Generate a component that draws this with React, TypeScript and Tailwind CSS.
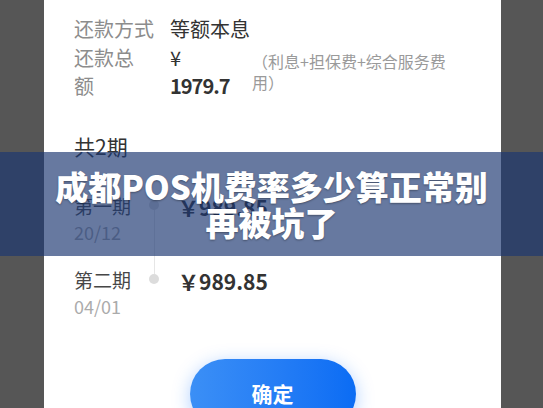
const font = "font-['Noto_Sans_CJK_SC','Noto_Sans',sans-serif]";

type Installment = { name: string; date: string; amount: string };

const installments: Installment[] = [
  { name: "第一期", date: "20/12", amount: "989.85" },
  { name: "第二期", date: "04/01", amount: "989.85" },
];

function InstallmentRow({ item, first, last }: { item: Installment; first: boolean; last: boolean }) {
  return (
    <div className={`flex ${last ? "" : "pb-[22px]"}`}>
      <div className="w-[70px] shrink-0">
        <div className="text-[19px] leading-[26px] text-[#474747]">{item.name}</div>
        <div className="text-[18px] leading-[26px] text-[#ababab]">{item.date}</div>
      </div>
      {/* timeline: dot on the name line, thin rail to the next row */}
      <div className={`w-[20px] shrink-0 flex flex-col items-center ${last ? "" : "-mb-[22px]"}`}>
        <div className={`h-[7px] w-px ${first ? "bg-transparent" : "bg-[#e6e6e6]"}`} />
        <div className="size-[10px] rounded-full bg-[#dcdcdc]" />
        {!last && <div className="w-px flex-1 bg-[#e6e6e6]" />}
      </div>
      <div className="ml-[14px] text-[21px] leading-[28px] font-bold text-[#333]">￥{item.amount}</div>
    </div>
  );
}

export default function App() {
  return (
    <div className={`relative h-[408px] w-[543px] overflow-hidden bg-[#565656] ${font}`}>
      <div className="ml-[44px] h-full w-[457px] bg-white pl-[30px] pt-[15px]">
        <div className="flex text-[20px] leading-[28px]">
          <div className="w-[96px] shrink-0 text-[#8c8c8c]">还款方式</div>
          <div className="text-[#333]">等额本息</div>
        </div>

        <div className="mt-px flex items-center text-[20px] leading-[28px]">
          <div className="w-[96px] shrink-0 text-[#8c8c8c]">
            还款总<br />额
          </div>
          <div className="w-[82px] shrink-0 text-[#333]">
            <div>¥</div>
            <div className="font-bold tracking-[-1px]">1979.7</div>
          </div>
          <div className="w-[200px] text-[16px] leading-[21px] text-[#9a9a9a]">（利息+担保费+综合服务费用）</div>
        </div>

        <div className="mt-[32px] text-[21px] leading-[28px] text-[#333]">共2期</div>

        <div className="mt-[33px]">
          {installments.map((item, i) => (
            <InstallmentRow key={item.name} item={item} first={i === 0} last={i === installments.length - 1} />
          ))}
        </div>

        <div className="-ml-[30px] mt-[40px] flex justify-center">
          <button className="h-[70px] w-[166px] rounded-full bg-gradient-to-r from-[#3b8ff6] to-[#0a6cf4] text-[21px] font-bold text-white shadow-[0_4px_18px_rgba(30,120,255,0.35)]">
            确定
          </button>
        </div>
      </div>

      {/* caption banner across the screenshot */}
      <div className="absolute inset-x-0 top-[152px] flex h-[104px] items-center justify-center bg-[#1c3771]/[0.67] px-[40px]">
        <h1 className="text-center text-[33px] leading-[36px] font-black text-white [text-shadow:0_1px_2px_rgba(0,0,0,0.35)]">
          成都POS机费率多少算正常别再被坑了
        </h1>
      </div>
    </div>
  );
}
